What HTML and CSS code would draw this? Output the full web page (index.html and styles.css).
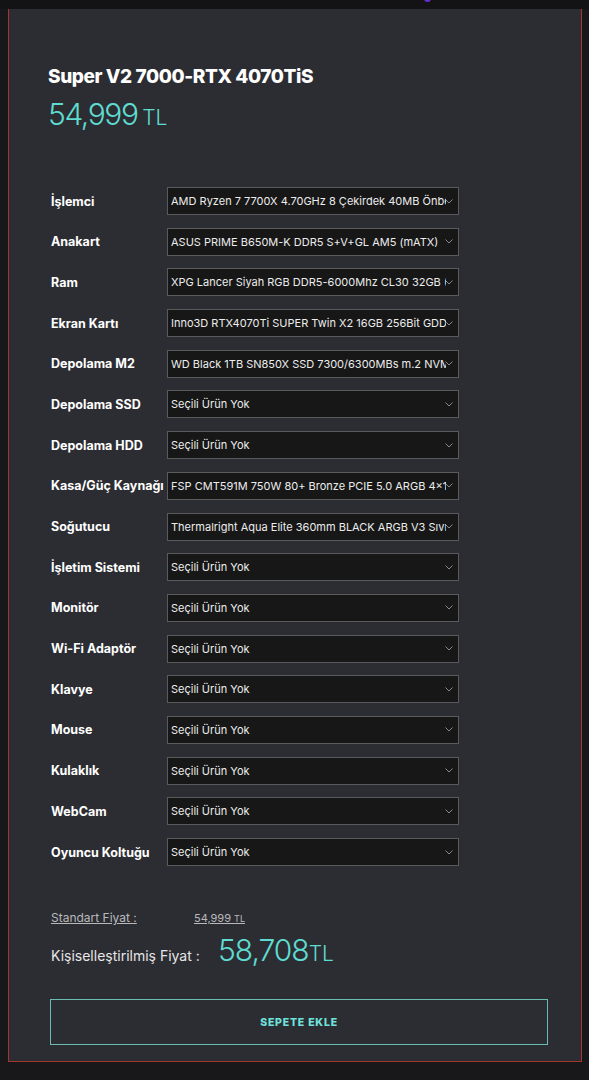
FILE: index.html
```html
<!DOCTYPE html>
<html lang="tr">
<head>
<meta charset="utf-8">
<title>Super V2 7000-RTX 4070TiS</title>
<link rel="stylesheet" href="styles.css">
</head>
<body>
<div class="topbar"><span class="dot"></span></div>
<main class="panel">
  <h1 class="title">Super V2 7000-RTX 4070TiS</h1>
  <div class="price"><span class="num">54,999</span> <span class="cur">TL</span></div>

  <div class="rows">
    <div class="row"><span class="label">İşlemci</span><select class="sel"><option>AMD Ryzen 7 7700X 4.70GHz 8 Çekirdek 40MB Önbellek</option></select></div>
    <div class="row"><span class="label">Anakart</span><select class="sel"><option>ASUS PRIME B650M-K DDR5 S+V+GL AM5 (mATX)</option></select></div>
    <div class="row"><span class="label">Ram</span><select class="sel"><option>XPG Lancer Siyah RGB DDR5-6000Mhz CL30 32GB (2x16GB)</option></select></div>
    <div class="row"><span class="label">Ekran Kartı</span><select class="sel"><option>Inno3D RTX4070Ti SUPER Twin X2 16GB 256Bit GDDR6X</option></select></div>
    <div class="row"><span class="label">Depolama M2</span><select class="sel"><option>WD Black 1TB SN850X SSD 7300/6300MBs m.2 NVMe</option></select></div>
    <div class="row"><span class="label">Depolama SSD</span><select class="sel"><option>Seçili Ürün Yok</option></select></div>
    <div class="row"><span class="label">Depolama HDD</span><select class="sel"><option>Seçili Ürün Yok</option></select></div>
    <div class="row"><span class="label">Kasa/Güç Kaynağı</span><select class="sel"><option>FSP CMT591M 750W 80+ Bronze PCIE 5.0 ARGB 4x120mm</option></select></div>
    <div class="row"><span class="label">Soğutucu</span><select class="sel"><option>Thermalright Aqua Elite 360mm BLACK ARGB V3 Sıvı Soğutucu</option></select></div>
    <div class="row"><span class="label">İşletim Sistemi</span><select class="sel"><option>Seçili Ürün Yok</option></select></div>
    <div class="row"><span class="label">Monitör</span><select class="sel"><option>Seçili Ürün Yok</option></select></div>
    <div class="row"><span class="label">Wi-Fi Adaptör</span><select class="sel"><option>Seçili Ürün Yok</option></select></div>
    <div class="row"><span class="label">Klavye</span><select class="sel"><option>Seçili Ürün Yok</option></select></div>
    <div class="row"><span class="label">Mouse</span><select class="sel"><option>Seçili Ürün Yok</option></select></div>
    <div class="row"><span class="label">Kulaklık</span><select class="sel"><option>Seçili Ürün Yok</option></select></div>
    <div class="row"><span class="label">WebCam</span><select class="sel"><option>Seçili Ürün Yok</option></select></div>
    <div class="row"><span class="label">Oyuncu Koltuğu</span><select class="sel"><option>Seçili Ürün Yok</option></select></div>
  </div>

  <div class="std">
    <a class="std-label" href="#">Standart Fiyat :</a>
    <a class="std-val" href="#">54,999 <small>TL</small></a>
  </div>
  <div class="custom">
    <span class="custom-label">Kişiselleştirilmiş Fiyat :</span>
    <span class="custom-val"><span class="big">58,708</span><span class="cur2">TL</span></span>
  </div>

  <button class="cart">SEPETE EKLE</button>
</main>
</body>
</html>
```

FILE: styles.css
```css
html, body {
  margin: 0;
  padding: 0;
}
body {
  background: #18181b;
  font-family: Inter, "Noto Sans", "Liberation Sans", sans-serif;
  color: #fff;
  height: 1080px;
  overflow: hidden;
}
.topbar {
  height: 9px;
  background: #131315;
  position: relative;
}
.dot {
  position: absolute;
  left: 424px;
  top: -4px;
  width: 7px;
  height: 6px;
  border-radius: 50%;
  background: #6a2bd0;
}
.panel {
  margin-left: 8px;
  width: 574px;
  box-sizing: border-box;
  background: #2c2d33;
  border: 1px solid #a3372d;
  border-top: none;
  padding: 57px 0 16px 0;
}
.title {
  margin: 0 0 0 39px;
  font-size: 19px;
  font-weight: 800;
  line-height: 22px;
  letter-spacing: -0.4px;
}
.price {
  margin: 6px 0 0 39px;
  color: #5fdcd0;
  line-height: 40px;
}
.price .num {
  font-size: 30px;
  font-weight: 300;
  letter-spacing: -1.4px;
}
.price .cur {
  font-size: 21px;
  font-weight: 300;
}
.rows {
  margin: 48px 0 0 42px;
  display: flex;
  flex-direction: column;
  gap: 12.7px;
}
.row {
  display: flex;
  align-items: center;
  height: 28px;
}
.label {
  width: 116px;
  flex: none;
  font-size: 12.5px;
  font-weight: 700;
  color: #fff;
  white-space: nowrap;
}
.sel {
  -webkit-appearance: none;
  appearance: none;
  width: 292px;
  height: 28px;
  box-sizing: border-box;
  margin: 0;
  border: 1px solid #5a5a5c;
  border-radius: 0;
  background-color: #171717;
  background-image: url("data:image/svg+xml;utf8,<svg xmlns='http://www.w3.org/2000/svg' width='8' height='5' viewBox='0 0 8 5'><path d='M0.5 0.5 L4 4 L7.5 0.5' fill='none' stroke='%23888' stroke-width='1'/></svg>");
  background-repeat: no-repeat;
  background-position: right 5px center;
  color: #ececec;
  font-family: Inter, "Noto Sans", "Liberation Sans", sans-serif;
  font-size: 11px;
  padding: 0 12px 0 3px;
  outline: none;
}
.std {
  margin: 45px 0 0 42px;
  display: flex;
  font-size: 11px;
  line-height: 14px;
}
.std a {
  color: #b9b9bc;
  text-decoration: underline;
}
.std-label {
  width: 143px;
  font-size: 12px;
}
.std-val small {
  font-size: 9px;
}
.custom {
  margin: 6px 0 0 42px;
  display: flex;
  align-items: baseline;
}
.custom-label {
  font-size: 14px;
  color: #e6e6e6;
  width: 167px;
}
.custom-val {
  color: #5fdcd0;
}
.big {
  font-size: 30px;
  font-weight: 300;
  letter-spacing: -1px;
}
.cur2 {
  font-size: 21px;
  font-weight: 300;
}
.cart {
  display: block;
  margin: 31px 0 0 41px;
  width: 498px;
  height: 46px;
  background: transparent;
  border: 1px solid #6cbab4;
  border-radius: 0;
  color: #6fe3db;
  font-family: Inter, "Noto Sans", "Liberation Sans", sans-serif;
  font-weight: 800;
  font-size: 10.5px;
  letter-spacing: 0.8px;
  cursor: pointer;
}
```
